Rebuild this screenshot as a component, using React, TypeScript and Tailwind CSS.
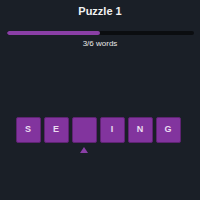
import React from 'react';

// Word puzzle screen: title, progress, letter slots with a cursor marker

const slots = ['S', 'E', '', 'I', 'N', 'G'];
const activeSlot = 2;
const found = 3;
const total = 6;

export default function App() {
  return (
    <div
      className="w-[200px] h-[200px] bg-[#1a1f27] flex flex-col items-center overflow-hidden"
      style={{ fontFamily: '"Liberation Sans", Arial, sans-serif' }}
    >
      <h1 className="mt-[4px] h-[14px] leading-[14px] text-[11px] font-bold text-[#f2f2f2]">Puzzle 1</h1>

      <div className="mt-[13px] w-[187px] h-[4px] bg-[#0b0d10] rounded-full overflow-hidden">
        <div
          className="h-full bg-[#8a3fa6] rounded-full"
          style={{ width: `${(found / total) * 100}%` }}
        />
      </div>

      <p className="mt-[4px] text-[8px] leading-[10px] text-[#e8e8e8]">
        {found}/{total} words
      </p>

      <div className="mt-[68px] flex gap-[3px] ml-[-4px]">
        {slots.map((ch, i) => (
          <div key={i} className="flex flex-col items-center">
            <div className="w-[25px] h-[26px] rounded-[2px] bg-[#82349e] border border-[#5e2372] flex items-center justify-center text-[9px] font-bold text-[#eadcf0]">
              {ch}
            </div>
            {i === activeSlot && (
              <div className="mt-[4px] w-0 h-0 border-l-[4px] border-r-[4px] border-b-[6px] border-l-transparent border-r-transparent border-b-[#8a3fa6]" />
            )}
          </div>
        ))}
      </div>
    </div>
  );
}
